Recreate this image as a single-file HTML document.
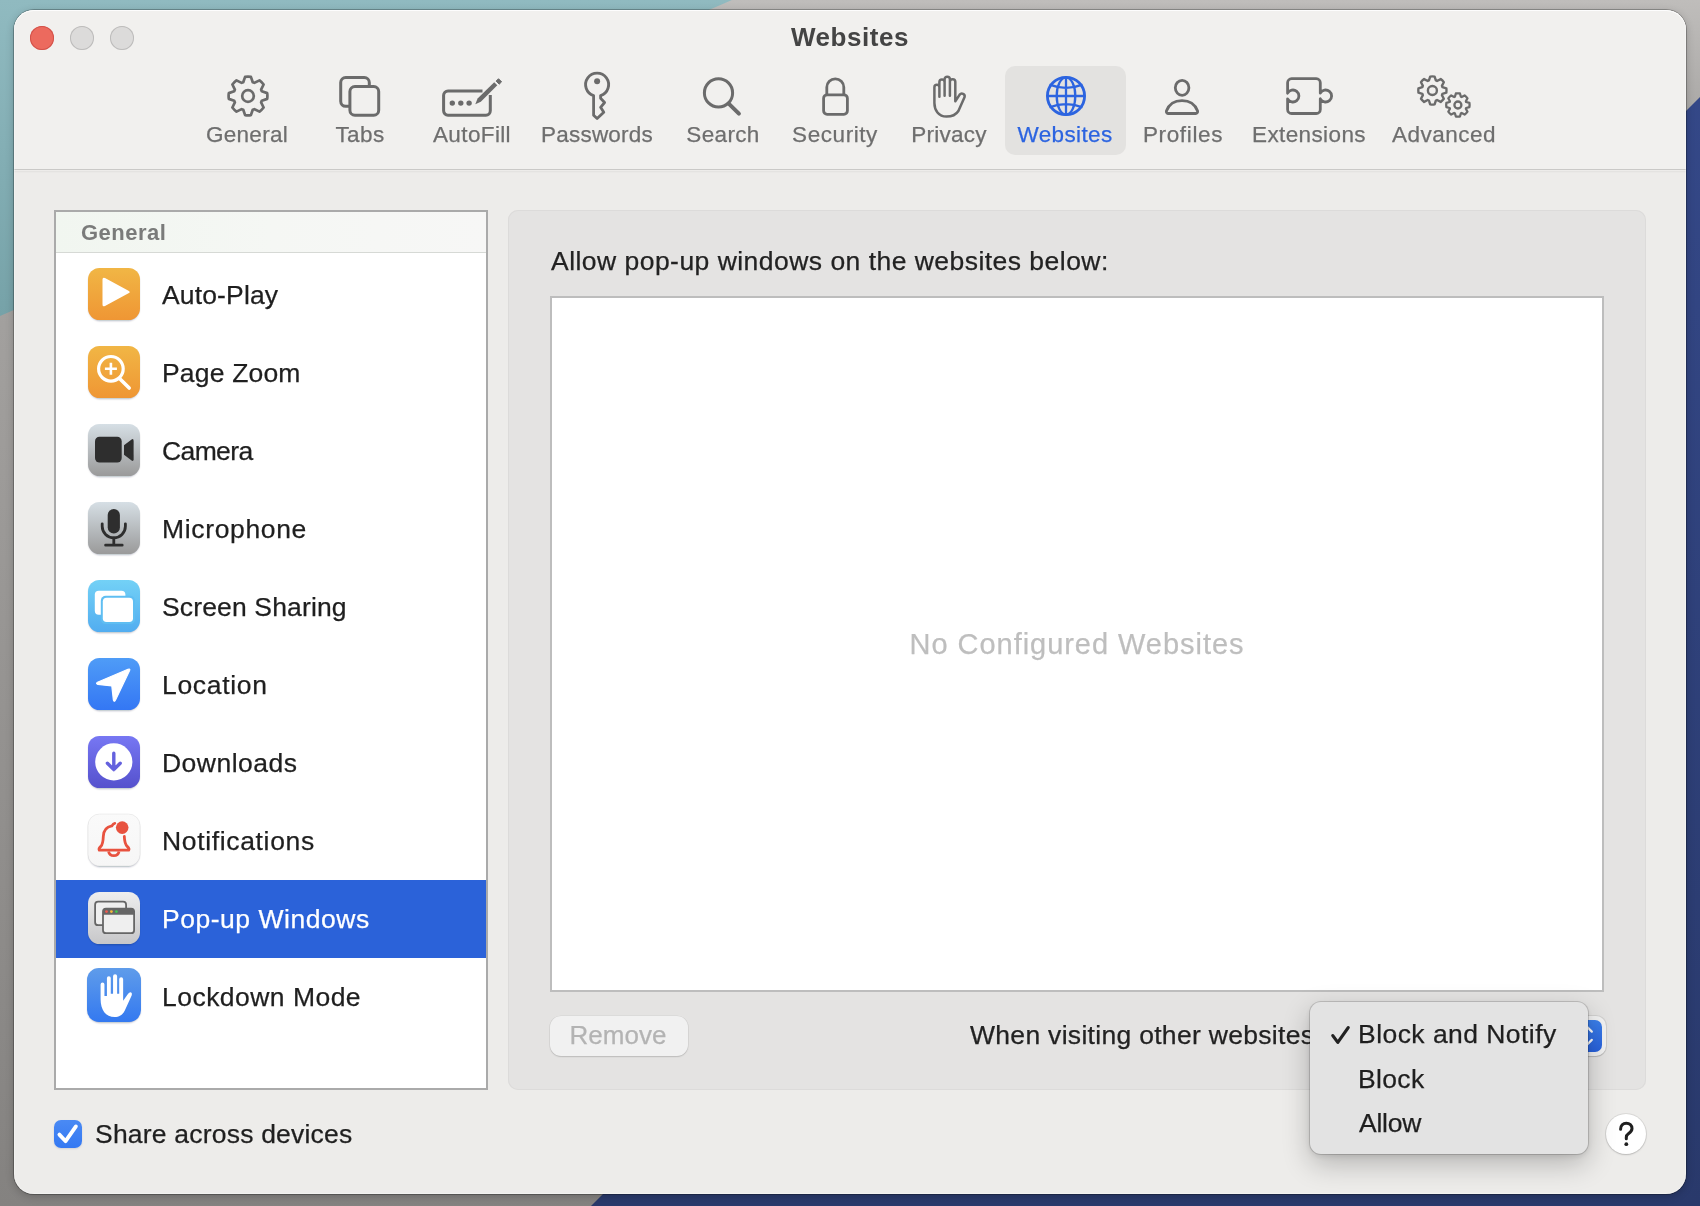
<!DOCTYPE html>
<html><head><meta charset="utf-8"><style>
*{margin:0;padding:0;box-sizing:border-box}
html,body{width:1700px;height:1206px;overflow:hidden}
body{position:relative;font-family:"Liberation Sans", sans-serif;background:#9B9997}
.abs{position:absolute}
.t{position:absolute;line-height:1;white-space:nowrap;will-change:transform;-webkit-text-stroke:0.25px currentColor}
</style></head><body>
<svg width="0" height="0" style="position:absolute"><defs><filter id="sh" x="-20%" y="-20%" width="140%" height="140%"><feGaussianBlur stdDeviation="1.1"/></filter></defs></svg>
<svg class="abs" width="1700" height="1206" style="left:0;top:0">
<defs>
<linearGradient id="bgG" x1="0" y1="0" x2="0" y2="1"><stop offset="0" stop-color="#BFBDBB"/><stop offset="0.09" stop-color="#ABA9A7"/><stop offset="0.27" stop-color="#A2A09E"/><stop offset="1" stop-color="#848280"/></linearGradient>
<linearGradient id="tealG" x1="0" y1="0" x2="0" y2="1"><stop offset="0" stop-color="#90BAC0"/><stop offset="1" stop-color="#76A2A8"/></linearGradient>
<linearGradient id="navyG" x1="0" y1="0" x2="0" y2="1"><stop offset="0" stop-color="#35498A"/><stop offset="1" stop-color="#29396B"/></linearGradient>
</defs>
<rect width="1700" height="1206" fill="url(#bgG)"/>
<polygon points="0,0 732,0 0,316" fill="url(#tealG)"/>
<polygon points="1797,0 1700,0 1700,97 591,1206 1797,1206" fill="url(#navyG)"/>
</svg>
<div class="abs" style="left:14px;top:10px;width:1672px;height:1184px;border-radius:20px;background:#EDECEA;box-shadow:0 0 0 1px rgba(0,0,0,0.25),0 2px 8px rgba(0,0,0,0.22);overflow:hidden">
  <div class="abs" style="left:0;top:0;width:1672px;height:160px;background:#F1F0EE;border-bottom:1px solid #CAC9C7"></div>
  <div class="abs" style="left:0;top:161px;width:1672px;height:2px;background:linear-gradient(rgba(0,0,0,0.05),rgba(0,0,0,0))"></div>
</div>
<div class="abs" style="left:14px;top:10px;width:1672px;height:1184px;border-radius:20px;box-shadow:inset 0 1px 0 rgba(255,255,255,0.85),inset 1px 0 0 rgba(255,255,255,0.3),inset -1px 0 0 rgba(255,255,255,0.3),inset 0 -1px 0 rgba(255,255,255,0.3)"></div>
<!-- traffic lights -->
<div class="abs" style="left:30px;top:26px;width:24px;height:24px;border-radius:50%;background:#EC6A5E;box-shadow:inset 0 0 0 1px #D2524A"></div>
<div class="abs" style="left:70px;top:26px;width:24px;height:24px;border-radius:50%;background:#DCDBDA;box-shadow:inset 0 0 0 1px #BDBCBB"></div>
<div class="abs" style="left:110px;top:26px;width:24px;height:24px;border-radius:50%;background:#DCDBDA;box-shadow:inset 0 0 0 1px #BDBCBB"></div>
<!-- selected tab bg -->
<div class="abs" style="left:1005px;top:66px;width:121px;height:89px;border-radius:10px;background:#E3E2E0"></div>
<svg class="abs" width="1700" height="200" style="left:0;top:0"><path d="M243.25 82.20 L245.10 76.82 A19.40 19.40 0 0 1 250.90 76.82 L252.75 82.20 A14.60 14.60 0 0 1 254.40 82.88 L254.40 82.88 L259.51 80.39 A19.40 19.40 0 0 1 263.61 84.49 L261.12 89.60 A14.60 14.60 0 0 1 261.80 91.25 L261.80 91.25 L267.18 93.10 A19.40 19.40 0 0 1 267.18 98.90 L261.80 100.75 A14.60 14.60 0 0 1 261.12 102.40 L261.12 102.40 L263.61 107.51 A19.40 19.40 0 0 1 259.51 111.61 L254.40 109.12 A14.60 14.60 0 0 1 252.75 109.80 L252.75 109.80 L250.90 115.18 A19.40 19.40 0 0 1 245.10 115.18 L243.25 109.80 A14.60 14.60 0 0 1 241.60 109.12 L241.60 109.12 L236.49 111.61 A19.40 19.40 0 0 1 232.39 107.51 L234.88 102.40 A14.60 14.60 0 0 1 234.20 100.75 L234.20 100.75 L228.82 98.90 A19.40 19.40 0 0 1 228.82 93.10 L234.20 91.25 A14.60 14.60 0 0 1 234.88 89.60 L234.88 89.60 L232.39 84.49 A19.40 19.40 0 0 1 236.49 80.39 L241.60 82.88 A14.60 14.60 0 0 1 243.25 82.20 Z" fill="none" stroke="#6B6B6B" stroke-width="2.7" stroke-linejoin="round"/><circle cx="248" cy="96" r="5.8" fill="none" stroke="#6B6B6B" stroke-width="2.7"/><rect x="340.7" y="77.5" width="28.6" height="28.8" rx="5" fill="none" stroke="#6B6B6B" stroke-width="3"/><rect x="349.9" y="86.6" width="28.8" height="28.6" rx="5" fill="#F1F0EE" stroke="#6B6B6B" stroke-width="3"/><path d="M482.5 90.9 H448 a4.4 4.4 0 0 0 -4.4 4.4 V110.8 a4.4 4.4 0 0 0 4.4 4.4 H485.9 a4.4 4.4 0 0 0 4.4 -4.4 V95" fill="none" stroke="#6B6B6B" stroke-width="3"/><circle cx="452.3" cy="103.1" r="2.7" fill="#6B6B6B"/><circle cx="460.8" cy="103.1" r="2.7" fill="#6B6B6B"/><circle cx="469.1" cy="103.1" r="2.7" fill="#6B6B6B"/><path d="M475.3 104.2 L477.6 98.6 L494.2 82.2 L497.3 85.3 L480.8 101.7 Z" fill="#6B6B6B"/><path d="M496.1 81.1 L498.5 78.7 L501.6 81.8 L499.2 84.2 Z" fill="#6B6B6B" stroke="#6B6B6B" stroke-width="1" stroke-linejoin="round"/><path d="M593.6 115.2 V95.6 A11.5 11.5 0 1 1 600.6 95.6 V98.3 L604.6 102.5 L600.6 107.3 L603.8 112.3 L597.1 118.6 Z" fill="none" stroke="#6B6B6B" stroke-width="2.8" stroke-linejoin="round"/><circle cx="597.1" cy="81.2" r="3" fill="#6B6B6B"/><circle cx="718.5" cy="92.9" r="14.1" fill="none" stroke="#6B6B6B" stroke-width="3"/><path d="M728.7 103.6 L738.9 113.6" stroke="#6B6B6B" stroke-width="4" stroke-linecap="round"/><path d="M826.8 94.8 V87.3 A8.5 8.5 0 0 1 843.8 87.3 V94.8" fill="none" stroke="#6B6B6B" stroke-width="2.8"/><rect x="823.6" y="94.8" width="23.8" height="19.5" rx="3.5" fill="none" stroke="#6B6B6B" stroke-width="2.8"/><path d="M934.4 103 V87.15 A2.5 2.5 0 0 1 939.4 87.15 V96.8 M939.4 96.8 V82 A2.6 2.6 0 0 1 944.6 82 V95.8 M944.6 95.8 V79.3 A2.65 2.65 0 0 1 949.9 79.3 V95.8 M949.9 95.8 V81.85 A2.7 2.7 0 0 1 955.3 81.85 V101.3 L959.7 94.6 A2.8 2.8 0 0 1 964.6 97 L958.4 111 C955.5 115.5 951 116.6 946.5 116.6 C938.5 116.6 934.4 110 934.4 103" fill="none" stroke="#6B6B6B" stroke-width="2.5" stroke-linecap="round" stroke-linejoin="round"/><circle cx="1066" cy="96" r="18.6" fill="none" stroke="#2C64E0" stroke-width="2.8"/><ellipse cx="1066" cy="96" rx="9.3" ry="18.6" fill="none" stroke="#2C64E0" stroke-width="2.3"/><path d="M1066 77.4 V114.6 M1047.4 96 H1084.6 M1049.5 84.6 Q1066 91 1082.5 84.6 M1049.5 107.4 Q1066 101 1082.5 107.4" fill="none" stroke="#2C64E0" stroke-width="2.3"/><ellipse cx="1182.1" cy="87.8" rx="6.8" ry="7.5" fill="none" stroke="#6B6B6B" stroke-width="2.8"/><path d="M1168.5 113.5 H1195.7 A2 2 0 0 0 1197.6 111 C1195 104 1189 100.6 1182 100.6 C1175 100.6 1169 104 1166.4 111 A2 2 0 0 0 1168.5 113.5 Z" fill="none" stroke="#6B6B6B" stroke-width="2.8" stroke-linejoin="round"/><path d="M1291.6 78.7 H1316.3 A4 4 0 0 1 1320.3 82.7 V93.2 A6 6 0 1 1 1320.3 98.8 V109.5 A4 4 0 0 1 1316.3 113.5 H1291.6 A4 4 0 0 1 1287.6 109.5 V98.8 A6 6 0 1 0 1287.6 93.2 V82.7 A4 4 0 0 1 1291.6 78.7 Z" fill="none" stroke="#6B6B6B" stroke-width="2.8" stroke-linejoin="round"/><path d="M1428.95 80.48 L1430.19 76.57 A14.10 14.10 0 0 1 1434.61 76.57 L1435.85 80.48 A10.60 10.60 0 0 1 1437.05 80.97 L1437.05 80.97 L1440.69 79.09 A14.10 14.10 0 0 1 1443.81 82.21 L1441.93 85.85 A10.60 10.60 0 0 1 1442.42 87.05 L1442.42 87.05 L1446.33 88.29 A14.10 14.10 0 0 1 1446.33 92.71 L1442.42 93.95 A10.60 10.60 0 0 1 1441.93 95.15 L1441.93 95.15 L1443.81 98.79 A14.10 14.10 0 0 1 1440.69 101.91 L1437.05 100.03 A10.60 10.60 0 0 1 1435.85 100.52 L1435.85 100.52 L1434.61 104.43 A14.10 14.10 0 0 1 1430.19 104.43 L1428.95 100.52 A10.60 10.60 0 0 1 1427.75 100.03 L1427.75 100.03 L1424.11 101.91 A14.10 14.10 0 0 1 1420.99 98.79 L1422.87 95.15 A10.60 10.60 0 0 1 1422.38 93.95 L1422.38 93.95 L1418.47 92.71 A14.10 14.10 0 0 1 1418.47 88.29 L1422.38 87.05 A10.60 10.60 0 0 1 1422.87 85.85 L1422.87 85.85 L1420.99 82.21 A14.10 14.10 0 0 1 1424.11 79.09 L1427.75 80.97 A10.60 10.60 0 0 1 1428.95 80.48 Z" fill="none" stroke="#6B6B6B" stroke-width="2.4" stroke-linejoin="round"/><circle cx="1432.4" cy="90.5" r="4.5" fill="none" stroke="#6B6B6B" stroke-width="2.4"/><path d="M1454.89 96.73 L1455.87 93.48 A11.70 11.70 0 0 1 1459.93 93.48 L1460.91 96.73 A8.80 8.80 0 0 1 1461.62 97.02 L1461.62 97.02 L1464.61 95.42 A11.70 11.70 0 0 1 1467.48 98.29 L1465.88 101.28 A8.80 8.80 0 0 1 1466.17 101.99 L1466.17 101.99 L1469.42 102.97 A11.70 11.70 0 0 1 1469.42 107.03 L1466.17 108.01 A8.80 8.80 0 0 1 1465.88 108.72 L1465.88 108.72 L1467.48 111.71 A11.70 11.70 0 0 1 1464.61 114.58 L1461.62 112.98 A8.80 8.80 0 0 1 1460.91 113.27 L1460.91 113.27 L1459.93 116.52 A11.70 11.70 0 0 1 1455.87 116.52 L1454.89 113.27 A8.80 8.80 0 0 1 1454.18 112.98 L1454.18 112.98 L1451.19 114.58 A11.70 11.70 0 0 1 1448.32 111.71 L1449.92 108.72 A8.80 8.80 0 0 1 1449.63 108.01 L1449.63 108.01 L1446.38 107.03 A11.70 11.70 0 0 1 1446.38 102.97 L1449.63 101.99 A8.80 8.80 0 0 1 1449.92 101.28 L1449.92 101.28 L1448.32 98.29 A11.70 11.70 0 0 1 1451.19 95.42 L1454.18 97.02 A8.80 8.80 0 0 1 1454.89 96.73 Z" fill="none" stroke="#6B6B6B" stroke-width="2.3" stroke-linejoin="round"/><circle cx="1457.9" cy="105" r="3.5" fill="none" stroke="#6B6B6B" stroke-width="2.3"/></svg>
<!-- sidebar -->
<div class="abs" style="left:54px;top:210px;width:434px;height:880px;border:2px solid #AAAAAA;background:#FFFFFF"></div>
<div class="abs" style="left:56px;top:212px;width:430px;height:41px;background:linear-gradient(90deg,#F1F6F0,#F5F7F4 50%,#F7F7F6);border-bottom:1px solid #D6D9D5"></div>
<div class="abs" style="left:56px;top:880px;width:430px;height:78px;background:#2B62D9"></div>
<svg class="abs" width="52" height="56" viewBox="0 0 52 56.000" style="left:88px;top:268px;overflow:visible"><defs><linearGradient id="g268" x1="0" y1="0" x2="0" y2="1"><stop offset="0" stop-color="#F1B645"/><stop offset="1" stop-color="#EF9634"/></linearGradient></defs><rect x="1" y="2" width="50" height="50.5" rx="11.5" fill="rgba(20,30,60,0.42)" filter="url(#sh)"/><rect x="0" y="0" width="52" height="52" rx="11.5" fill="url(#g268)"/><path d="M14.5 11.5 Q14.5 8.8 17 10 L40.5 22.7 Q43 24 40.5 25.3 L17 38 Q14.5 39.2 14.5 36.5 Z" fill="#fff"/></svg><svg class="abs" width="52" height="56" viewBox="0 0 52 56.000" style="left:88px;top:346px;overflow:visible"><defs><linearGradient id="g346" x1="0" y1="0" x2="0" y2="1"><stop offset="0" stop-color="#F1B645"/><stop offset="1" stop-color="#EF9634"/></linearGradient></defs><rect x="1" y="2" width="50" height="50.5" rx="11.5" fill="rgba(20,30,60,0.42)" filter="url(#sh)"/><rect x="0" y="0" width="52" height="52" rx="11.5" fill="url(#g346)"/><circle cx="22.9" cy="22.8" r="12.3" fill="none" stroke="#fff" stroke-width="3.2"/><path d="M22.9 16.8 V28.8 M16.9 22.8 H28.9" stroke="#fff" stroke-width="2.6"/><path d="M32.3 33.2 L41.2 42" stroke="#fff" stroke-width="3.6" stroke-linecap="round"/></svg><svg class="abs" width="52" height="56" viewBox="0 0 52 56.000" style="left:88px;top:424px;overflow:visible"><defs><linearGradient id="g424" x1="0" y1="0" x2="0" y2="1"><stop offset="0" stop-color="#D6DFE5"/><stop offset="1" stop-color="#9A9A9A"/></linearGradient></defs><rect x="1" y="2" width="50" height="50.5" rx="11.5" fill="rgba(20,30,60,0.42)" filter="url(#sh)"/><rect x="0" y="0" width="52" height="52" rx="11.5" fill="url(#g424)"/><rect x="7" y="12.8" width="26.7" height="25.8" rx="4.5" fill="#2E2E2E"/><path d="M36 21.2 L43.6 15.4 Q45.6 14.4 45.6 16.8 V35.2 Q45.6 37.6 43.6 36.6 L36 30.8 Z" fill="#2E2E2E"/></svg><svg class="abs" width="52" height="56" viewBox="0 0 52 56.000" style="left:88px;top:502px;overflow:visible"><defs><linearGradient id="g502" x1="0" y1="0" x2="0" y2="1"><stop offset="0" stop-color="#D6DFE5"/><stop offset="1" stop-color="#9A9A9A"/></linearGradient></defs><rect x="1" y="2" width="50" height="50.5" rx="11.5" fill="rgba(20,30,60,0.42)" filter="url(#sh)"/><rect x="0" y="0" width="52" height="52" rx="11.5" fill="url(#g502)"/><rect x="19.7" y="7" width="12.2" height="24.6" rx="6.1" fill="#2E2E2E"/><path d="M14.2 21.8 V24.2 A11.6 11.6 0 0 0 37.4 24.2 V21.8" fill="none" stroke="#2E2E2E" stroke-width="2.8" stroke-linecap="round"/><path d="M25.8 36 V43.2 M17.6 43.2 H34.2" stroke="#2E2E2E" stroke-width="2.8" stroke-linecap="round"/></svg><svg class="abs" width="52" height="56" viewBox="0 0 52 56.000" style="left:88px;top:580px;overflow:visible"><defs><linearGradient id="g580" x1="0" y1="0" x2="0" y2="1"><stop offset="0" stop-color="#73D1F6"/><stop offset="1" stop-color="#52ADF0"/></linearGradient></defs><rect x="1" y="2" width="50" height="50.5" rx="11.5" fill="rgba(20,30,60,0.42)" filter="url(#sh)"/><rect x="0" y="0" width="52" height="52" rx="11.5" fill="url(#g580)"/><rect x="6.8" y="10.7" width="30.6" height="24.1" rx="4" fill="#fff"/><rect x="12.8" y="15.8" width="34.2" height="28.3" rx="5" fill="#5FBEF2"/><rect x="14.8" y="17.7" width="30.2" height="24.4" rx="3.8" fill="#fff"/></svg><svg class="abs" width="52" height="56" viewBox="0 0 52 56.000" style="left:88px;top:658px;overflow:visible"><defs><linearGradient id="g658" x1="0" y1="0" x2="0" y2="1"><stop offset="0" stop-color="#4F9CF7"/><stop offset="1" stop-color="#3477F4"/></linearGradient></defs><rect x="1" y="2" width="50" height="50.5" rx="11.5" fill="rgba(20,30,60,0.42)" filter="url(#sh)"/><rect x="0" y="0" width="52" height="52" rx="11.5" fill="url(#g658)"/><path d="M40 11.3 Q42.5 10.4 41.6 12.6 L27.4 42.2 Q26.2 44.4 25.4 42.1 L23.8 27.9 L9.9 26.4 Q7.4 25.6 9.5 24.3 Z" fill="#fff" stroke="#fff" stroke-width="1.2" stroke-linejoin="round"/></svg><svg class="abs" width="52" height="56" viewBox="0 0 52 56.000" style="left:88px;top:736px;overflow:visible"><defs><linearGradient id="g736" x1="0" y1="0" x2="0" y2="1"><stop offset="0" stop-color="#7777F3"/><stop offset="1" stop-color="#5551CD"/></linearGradient></defs><rect x="1" y="2" width="50" height="50.5" rx="11.5" fill="rgba(20,30,60,0.42)" filter="url(#sh)"/><rect x="0" y="0" width="52" height="52" rx="11.5" fill="url(#g736)"/><circle cx="25.8" cy="25.8" r="18.6" fill="#fff"/><path d="M25.8 17.3 V33.4 M19.4 27.2 L25.8 33.6 L32.2 27.2" fill="none" stroke="#6461DE" stroke-width="3.4" stroke-linecap="round" stroke-linejoin="round"/></svg><svg class="abs" width="52" height="56" viewBox="0 0 52 56.000" style="left:88px;top:814px;overflow:visible"><defs><linearGradient id="g814" x1="0" y1="0" x2="0" y2="1"><stop offset="0" stop-color="#FAFAFA"/><stop offset="1" stop-color="#F6F6F6"/></linearGradient></defs><rect x="1" y="2" width="50" height="50.5" rx="11.5" fill="rgba(20,30,60,0.42)" filter="url(#sh)"/><rect x="0" y="0" width="52" height="52" rx="11.5" fill="url(#g814)" stroke="rgba(0,0,0,0.08)" stroke-width="0.8"/><path d="M26.8 9.3 C25.3 9.5 24.6 10.6 23.8 11.9 C19 12.8 15.5 16.5 15.3 22.5 C15.1 28 14.8 30.5 12.8 32.4 C11 34 10.6 35 11.3 36.2 H40.7 C41.5 35 41 34 39.2 32.4 C37 30.3 36.5 28 36.3 22.3" fill="none" stroke="#E8523F" stroke-width="2.8" stroke-linecap="round" stroke-linejoin="round"/><path d="M20.6 37.4 A5.3 5.3 0 0 0 31 37.4" fill="none" stroke="#E8523F" stroke-width="2.8"/><circle cx="34.2" cy="13.6" r="6.3" fill="#E8523F"/></svg><svg class="abs" width="52" height="56" viewBox="0 0 52 56.000" style="left:88px;top:892px;overflow:visible"><defs><linearGradient id="g892" x1="0" y1="0" x2="0" y2="1"><stop offset="0" stop-color="#EEEEEE"/><stop offset="1" stop-color="#C7C7C9"/></linearGradient></defs><rect x="1" y="2" width="50" height="50.5" rx="11.5" fill="rgba(20,30,60,0.42)" filter="url(#sh)"/><rect x="0" y="0" width="52" height="52" rx="11.5" fill="url(#g892)"/><rect x="7.1" y="9.7" width="31" height="23.5" rx="3" fill="#EFEFEF" stroke="#666" stroke-width="1.8"/><rect x="15" y="16.6" width="31.1" height="24.6" rx="3" fill="#EFEFEF" stroke="#666" stroke-width="1.8"/><path d="M15 22.7 V19.6 A3 3 0 0 1 18 16.6 H43.1 A3 3 0 0 1 46.1 19.6 V22.7 Z" fill="#666"/><circle cx="18.5" cy="19.6" r="1.4" fill="#F05A50"/><circle cx="23.4" cy="19.6" r="1.4" fill="#F5B93A"/><circle cx="28.4" cy="19.6" r="1.4" fill="#43C64F"/></svg><svg class="abs" width="54" height="58" viewBox="0 0 52 55.852" style="left:87px;top:968px;overflow:visible"><defs><linearGradient id="g968" x1="0" y1="0" x2="0" y2="1"><stop offset="0" stop-color="#5F9CEA"/><stop offset="1" stop-color="#3479F0"/></linearGradient></defs><rect x="1" y="2" width="50" height="50.5" rx="11.5" fill="rgba(20,30,60,0.42)" filter="url(#sh)"/><rect x="0" y="0" width="52" height="52" rx="11.5" fill="url(#g968)"/><path d="M13.1 30 V15.8 A1.85 1.85 0 0 1 16.8 15.8 V27 H19.2 V9.7 A1.85 1.85 0 0 1 22.9 9.7 V24.7 H25.1 V8 A1.95 1.95 0 0 1 29 8 V24.7 H31 V10.9 A1.9 1.9 0 0 1 34.8 10.9 V31.6 L39.6 24.8 Q41.2 22.6 42.6 23.6 Q43.8 24.5 43 26.5 L36.4 41 C34.2 45.6 30.5 47.3 26.7 47.3 C18 47.3 13.1 40 13.1 30 Z" fill="#fff"/></svg>
<!-- right panel -->
<div class="abs" style="left:508px;top:210px;width:1138px;height:880px;border-radius:10px;background:#E4E3E2;box-shadow:inset 0 0 0 1px #DCDBDA"></div>
<div class="abs" style="left:550px;top:296px;width:1054px;height:696px;background:#FFFFFF;border:2px solid #BDBDBD"></div>
<!-- remove button -->
<div class="abs" style="left:550px;top:1016px;width:138px;height:40px;border-radius:11px;background:#F1F1F1;box-shadow:0 0 0 0.5px rgba(0,0,0,0.07),0 1px 1.5px rgba(0,0,0,0.14)"></div>
<!-- popup button (mostly hidden) -->
<div class="abs" style="left:1500px;top:1016px;width:106px;height:40px;border-radius:10px;background:#F2F2F2;box-shadow:0 0 0 1px rgba(0,0,0,0.08),0 1px 1px rgba(0,0,0,0.12)"></div>
<div class="abs" style="left:1570px;top:1020px;width:32px;height:32px;border-radius:7px;background:linear-gradient(#3B7FEA,#2861DC)"></div>
<svg class="abs" width="40" height="40" style="left:1570px;top:1016px"><path d="M10.5 14.5 L16 9.8 L21.8 15.6 M21.8 23.9 L16 29.7 L10.5 25" fill="none" stroke="#fff" stroke-width="2.2" stroke-linecap="round" stroke-linejoin="round"/></svg>
<!-- checkbox -->
<div class="abs" style="left:54px;top:1120px;width:28px;height:28px;border-radius:7px;background:linear-gradient(#4A8AF4,#3478F2);box-shadow:0 1px 2px rgba(0,0,60,0.12)"></div>
<svg class="abs" width="28" height="28" style="left:54px;top:1120px"><path d="M5.4 14.6 L11.6 21.2 L21.9 6.4" fill="none" stroke="#fff" stroke-width="3.8" stroke-linecap="round" stroke-linejoin="round"/></svg>
<!-- help -->
<div class="abs" style="left:1606px;top:1114px;width:40px;height:40px;border-radius:50%;background:#FFFFFF;box-shadow:0 0 0 1px rgba(0,0,0,0.08),0 1px 2px rgba(0,0,0,0.15)"></div>
<svg class="abs" width="40" height="40" style="left:1606px;top:1114px"><path d="M14.6 15.2 C14.6 11.3 17 9.2 20.3 9.2 C23.6 9.2 26 11.3 26 14.6 C26 17.3 24.3 18.4 22.6 19.6 C21 20.7 20.3 21.6 20.3 23.5 V24.8" fill="none" stroke="#1F1F1F" stroke-width="3" stroke-linecap="round"/><circle cx="20.3" cy="30.2" r="1.9" fill="#1F1F1F"/></svg>

<div class="t" style="left:350.00px;width:1000px;text-align:center;top:23.99px;font-size:26px;color:#444444;font-weight:700;letter-spacing:0.571px;-webkit-text-stroke:0;">Websites</div><div class="t" style="left:-252.60px;width:1000px;text-align:center;top:123.95px;font-size:22.5px;color:#6E6E6E;font-weight:400;letter-spacing:0.265px;">General</div><div class="t" style="left:-140.10px;width:1000px;text-align:center;top:123.95px;font-size:22.5px;color:#6E6E6E;font-weight:400;letter-spacing:0.402px;">Tabs</div><div class="t" style="left:-27.90px;width:1000px;text-align:center;top:123.95px;font-size:22.5px;color:#6E6E6E;font-weight:400;letter-spacing:0.373px;">AutoFill</div><div class="t" style="left:97.40px;width:1000px;text-align:center;top:123.95px;font-size:22.5px;color:#6E6E6E;font-weight:400;letter-spacing:0.204px;">Passwords</div><div class="t" style="left:223.20px;width:1000px;text-align:center;top:123.95px;font-size:22.5px;color:#6E6E6E;font-weight:400;letter-spacing:0.36px;">Search</div><div class="t" style="left:335.30px;width:1000px;text-align:center;top:123.95px;font-size:22.5px;color:#6E6E6E;font-weight:400;letter-spacing:0.571px;">Security</div><div class="t" style="left:448.60px;width:1000px;text-align:center;top:123.95px;font-size:22.5px;color:#6E6E6E;font-weight:400;letter-spacing:0.267px;">Privacy</div><div class="t" style="left:565.20px;width:1000px;text-align:center;top:123.95px;font-size:22.5px;color:#2C64E0;font-weight:400;letter-spacing:0.371px;">Websites</div><div class="t" style="left:682.60px;width:1000px;text-align:center;top:123.95px;font-size:22.5px;color:#6E6E6E;font-weight:400;letter-spacing:0.629px;">Profiles</div><div class="t" style="left:808.80px;width:1000px;text-align:center;top:123.95px;font-size:22.5px;color:#6E6E6E;font-weight:400;letter-spacing:0.379px;">Extensions</div><div class="t" style="left:943.70px;width:1000px;text-align:center;top:123.95px;font-size:22.5px;color:#6E6E6E;font-weight:400;letter-spacing:0.517px;">Advanced</div><div class="t" style="left:81.20px;top:222.38px;font-size:22px;color:#7A7B7A;font-weight:700;letter-spacing:0.5px;-webkit-text-stroke:0;">General</div><div class="t" style="left:162.20px;top:281.57px;font-size:26.5px;color:#1F1F1F;font-weight:400;letter-spacing:0.15px;">Auto-Play</div><div class="t" style="left:162.20px;top:359.57px;font-size:26.5px;color:#1F1F1F;font-weight:400;letter-spacing:0.176px;">Page Zoom</div><div class="t" style="left:162.20px;top:437.57px;font-size:26.5px;color:#1F1F1F;font-weight:400;letter-spacing:-0.62px;">Camera</div><div class="t" style="left:162.20px;top:515.57px;font-size:26.5px;color:#1F1F1F;font-weight:400;letter-spacing:0.653px;">Microphone</div><div class="t" style="left:162.20px;top:593.57px;font-size:26.5px;color:#1F1F1F;font-weight:400;letter-spacing:0.146px;">Screen Sharing</div><div class="t" style="left:162.20px;top:671.57px;font-size:26.5px;color:#1F1F1F;font-weight:400;letter-spacing:0.671px;">Location</div><div class="t" style="left:162.20px;top:749.57px;font-size:26.5px;color:#1F1F1F;font-weight:400;letter-spacing:0.475px;">Downloads</div><div class="t" style="left:162.20px;top:827.57px;font-size:26.5px;color:#1F1F1F;font-weight:400;letter-spacing:0.652px;">Notifications</div><div class="t" style="left:162.20px;top:905.57px;font-size:26.5px;color:#FFFFFF;font-weight:400;letter-spacing:0.531px;">Pop-up Windows</div><div class="t" style="left:162.20px;top:983.57px;font-size:26.5px;color:#1F1F1F;font-weight:400;letter-spacing:0.467px;">Lockdown Mode</div><div class="t" style="left:550.80px;top:247.57px;font-size:26.5px;color:#222222;font-weight:400;letter-spacing:0.468px;">Allow pop-up windows on the websites below:</div><div class="t" style="left:577.30px;width:1000px;text-align:center;top:629.95px;font-size:29px;color:#BEBEBE;font-weight:400;letter-spacing:0.961px;">No Configured Websites</div><div class="t" style="left:118.00px;width:1000px;text-align:center;top:1021.99px;font-size:26px;color:#B3B3B3;font-weight:400;letter-spacing:0.0px;">Remove</div><div class="t" style="left:969.50px;top:1021.97px;font-size:26.5px;color:#222222;font-weight:400;letter-spacing:0.3px;">When visiting other websites:</div><div class="t" style="left:94.50px;top:1121.37px;font-size:26.5px;color:#1F1F1F;font-weight:400;letter-spacing:0.205px;">Share across devices</div>
<!-- menu -->
<div class="abs" style="left:1310px;top:1002px;width:278px;height:152px;border-radius:11px;background:#E3E3E3;box-shadow:0 0 0 1px rgba(0,0,0,0.15),0 10px 28px rgba(0,0,0,0.24),0 2px 6px rgba(0,0,0,0.1)"></div>
<svg class="abs" width="30" height="30" style="left:1325px;top:1020px"><path d="M7.8 15.6 L12.8 22.4 L23.2 7.6" fill="none" stroke="#222" stroke-width="3.2" stroke-linecap="round" stroke-linejoin="round"/></svg>
<div class="t" style="left:1357.60px;top:1021.37px;font-size:26.5px;color:#1F1F1F;font-weight:400;letter-spacing:0.452px;">Block and Notify</div><div class="t" style="left:1357.60px;top:1065.67px;font-size:26.5px;color:#1F1F1F;font-weight:400;letter-spacing:0.35px;">Block</div><div class="t" style="left:1359.40px;top:1109.87px;font-size:26.5px;color:#1F1F1F;font-weight:400;letter-spacing:-0.25px;">Allow</div>
</body></html>
